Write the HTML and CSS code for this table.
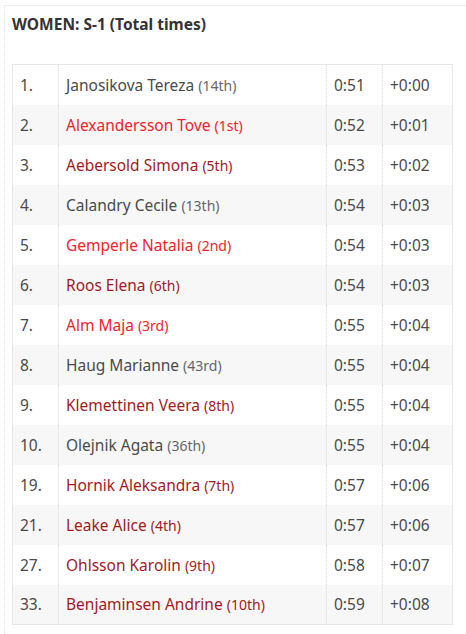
FILE: index.html
```html
<!DOCTYPE html>
<html>
<head>
<meta charset="utf-8">
<link rel="stylesheet" href="styles.css">
</head>
<body>
<div class="box">
  <h3 class="title">WOMEN: S-1 (Total times)</h3>
  <table class="res">
    <tr><td class="rk">1.</td><td class="nm">Janosikova Tereza <span class="pl">(14th)</span></td><td class="tm">0:51</td><td class="df">+0:00</td></tr>
    <tr><td class="rk">2.</td><td class="nm red">Alexandersson Tove <span class="pl">(1st)</span></td><td class="tm">0:52</td><td class="df">+0:01</td></tr>
    <tr><td class="rk">3.</td><td class="nm dark">Aebersold Simona <span class="pl">(5th)</span></td><td class="tm">0:53</td><td class="df">+0:02</td></tr>
    <tr><td class="rk">4.</td><td class="nm">Calandry Cecile <span class="pl">(13th)</span></td><td class="tm">0:54</td><td class="df">+0:03</td></tr>
    <tr><td class="rk">5.</td><td class="nm red">Gemperle Natalia <span class="pl">(2nd)</span></td><td class="tm">0:54</td><td class="df">+0:03</td></tr>
    <tr><td class="rk">6.</td><td class="nm dark">Roos Elena <span class="pl">(6th)</span></td><td class="tm">0:54</td><td class="df">+0:03</td></tr>
    <tr><td class="rk">7.</td><td class="nm red">Alm Maja <span class="pl">(3rd)</span></td><td class="tm">0:55</td><td class="df">+0:04</td></tr>
    <tr><td class="rk">8.</td><td class="nm">Haug Marianne <span class="pl">(43rd)</span></td><td class="tm">0:55</td><td class="df">+0:04</td></tr>
    <tr><td class="rk">9.</td><td class="nm dark">Klemettinen Veera <span class="pl">(8th)</span></td><td class="tm">0:55</td><td class="df">+0:04</td></tr>
    <tr><td class="rk">10.</td><td class="nm">Olejnik Agata <span class="pl">(36th)</span></td><td class="tm">0:55</td><td class="df">+0:04</td></tr>
    <tr><td class="rk">19.</td><td class="nm dark">Hornik Aleksandra <span class="pl">(7th)</span></td><td class="tm">0:57</td><td class="df">+0:06</td></tr>
    <tr><td class="rk">21.</td><td class="nm dark">Leake Alice <span class="pl">(4th)</span></td><td class="tm">0:57</td><td class="df">+0:06</td></tr>
    <tr><td class="rk">27.</td><td class="nm dark">Ohlsson Karolin <span class="pl">(9th)</span></td><td class="tm">0:58</td><td class="df">+0:07</td></tr>
    <tr><td class="rk">33.</td><td class="nm dark">Benjaminsen Andrine <span class="pl">(10th)</span></td><td class="tm">0:59</td><td class="df">+0:08</td></tr>
  </table>
</div>
</body>
</html>
```
FILE: styles.css
```css
html, body {
  margin: 0;
  padding: 0;
  background: #fff;
  overflow: hidden;
}
body {
  font-family: "Noto Sans", "Open Sans", sans-serif;
  color: #4a4a4a;
}
.box {
  margin: 5px 0 0 4px;
  width: 453px;
  height: 700px;
  border-top: 1px solid #eee;
  border-left: 1px dotted #ddd;
  border-right: 1px solid #eee;
  padding: 0 5px 0 7px;
}
.title {
  margin: 0;
  padding-top: 6px;
  height: 24px;
  line-height: 24px;
  font-size: 15.5px;
  font-weight: bold;
  color: #333;
}
.res {
  margin-top: 28px;
  width: 441px;
  border-collapse: collapse;
  border: 1px solid #e6e6e6;
  font-size: 15.5px;
}
.res tr:nth-child(even) td {
  background: #f7f7f7;
}
.res td {
  height: 40px;
  padding: 0 7px;
  box-sizing: border-box;
  border-left: 1px dotted #ddd;
  vertical-align: middle;
  white-space: nowrap;
}
.res td:first-child {
  border-left: none;
}
.rk { width: 46px; }
.tm { width: 56px; }
.df { width: 70px; }
.nm .pl {
  font-size: 14px;
  color: #666;
}
.nm.red, .nm.red .pl { color: #f0232a; }
.nm.dark, .nm.dark .pl { color: #a2191f; }
```
